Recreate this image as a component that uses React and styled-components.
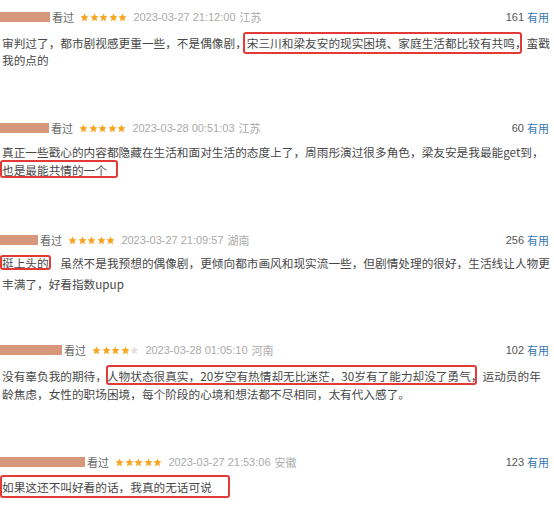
import React from "react";
import styled, { createGlobalStyle } from "styled-components";

const Global = createGlobalStyle`
  html, body { margin: 0; padding: 0; background: #fff; }
  body { width: 554px; height: 505px; overflow: hidden; }
`;

const List = styled.div`
  width: 554px;
  display: flex;
  flex-direction: column;
`;

const Item = styled.div`
  height: ${(p) => p.$h}px;
  padding-top: 7px;
  box-sizing: border-box;
  display: flex;
  flex-direction: column;
`;

const Header = styled.div`
  height: 20px;
  display: flex;
  align-items: center;
  padding-right: 5px;
  font-family: "Liberation Sans", "Noto Sans CJK SC", sans-serif;
  font-size: 11px;
`;

const Bar = styled.div`
  width: ${(p) => p.$w}px;
  height: 10px;
  background: #d6977b;
  flex: none;
`;

const Watched = styled.span`
  margin-left: 2px;
  color: #666;
  font-family: "Noto Sans CJK SC", sans-serif;
  font-size: 11px;
`;

const Stars = styled.span`
  display: inline-flex;
  gap: 0.6px;
  margin-left: 6px;
`;

const Date = styled.span`
  margin-left: 6px;
  color: #aaa;
`;

const Region = styled.span`
  margin-left: 4px;
  color: #aaa;
  font-family: "Noto Sans CJK SC", sans-serif;
`;

const Votes = styled.span`
  margin-left: auto;
  color: #555;
`;

const Useful = styled.span`
  margin-left: 3px;
  color: #3a77b0;
  font-family: "Noto Sans CJK SC", sans-serif;
`;

const Body = styled.div`
  margin-top: ${(p) => p.$m}px;
  padding-left: 2px;
  font-family: "Noto Sans CJK SC", sans-serif;
  font-size: 11.67px;
  line-height: ${(p) => p.$lh}px;
  color: #484848;
`;

const Line = styled.div`
  white-space: pre;
`;

const Mark = styled.span`
  position: relative;
  &::after {
    content: "";
    position: absolute;
    left: ${(p) => -p.$b.l}px;
    right: ${(p) => -p.$b.r}px;
    top: ${(p) => -p.$b.t}px;
    bottom: ${(p) => -p.$b.b}px;
    border: 2px solid #e23a36;
    border-radius: 3px;
    pointer-events: none;
  }
`;

const Star = ({ on }) => (
  <svg width="9" height="9" viewBox="0 0 24 24">
    <path
      d="M12 1.2l3.2 7.1 7.7.8-5.8 5.2 1.7 7.6L12 18l-6.8 3.9 1.7-7.6L1.1 9.1l7.7-.8z"
      fill={on ? "#f6a623" : "#e2e2e2"}
    />
  </svg>
);

const entries = [
  {
    bar: 50, stars: 5, date: "2023-03-27 21:12:00", region: "江苏", votes: 161, h: 111, m: 6.5, lh: 17,
    lines: [
      ["审判过了，都市剧视感更重一些，不是偶像剧，", { t: "宋三川和梁友安的现实困境、家庭生活都比较有共鸣，", b: { l: 4, r: -5, t: 2, b: 3 } }, "蛮戳"],
      ["我的点的"],
    ],
  },
  {
    bar: 49, stars: 5, date: "2023-03-28 00:51:03", region: "江苏", votes: 60, h: 112, m: 5, lh: 18,
    lines: [
      ["真正一些戳心的内容都隐藏在生活和面对生活的态度上了，周雨彤演过很多角色，梁友安是我最能get到，"],
      [{ t: "也是最能共情的一个", b: { l: 2, r: 11, t: 1, b: 0 } }],
    ],
  },
  {
    bar: 38, stars: 5, date: "2023-03-27 21:09:57", region: "湖南", votes: 256, h: 110, m: 2, lh: 21,
    lines: [
      [{ t: "挺上头的", b: { l: 2, r: 2, t: -1, b: -1 } }, "\u3000虽然不是我预想的偶像剧，更倾向都市画风和现实流一些，但剧情处理的很好，生活线让人物更"],
      ["丰满了，好看指数upup"],
    ],
  },
  {
    bar: 62, stars: 4, date: "2023-03-28 01:05:10", region: "河南", votes: 102, h: 112, m: 7, lh: 18,
    lines: [
      ["没有辜负我的期待，", { t: "人物状态很真实，20岁空有热情却无比迷茫，30岁有了能力却没了勇气，", b: { l: 1, r: -6, t: 2, b: 1 } }, "运动员的年"],
      ["龄焦虑，女性的职场困境，每个阶段的心境和想法都不尽相同，太有代入感了。"],
    ],
  },
  {
    bar: 85, stars: 5, date: "2023-03-27 21:53:06", region: "安徽", votes: 123, h: 60, m: 6, lh: 18,
    lines: [[{ t: "如果这还不叫好看的话，我真的无话可说", b: { l: 2, r: 18, t: 3, b: 3 } }]],
  },
];

export default function App() {
  return (
    <>
      <Global />
      <List>
        {entries.map((e, i) => (
          <Item key={i} $h={e.h}>
            <Header>
              <Bar $w={e.bar} />
              <Watched>看过</Watched>
              <Stars>
                {[0, 1, 2, 3, 4].map((k) => (
                  <Star key={k} on={k < e.stars} />
                ))}
              </Stars>
              <Date>{e.date}</Date>
              <Region>{e.region}</Region>
              <Votes>{e.votes}</Votes>
              <Useful>有用</Useful>
            </Header>
            <Body $m={e.m} $lh={e.lh}>
              {e.lines.map((ln, j) => (
                <Line key={j}>
                  {ln.map((seg, k) =>
                    typeof seg === "string" ? (
                      <React.Fragment key={k}>{seg}</React.Fragment>
                    ) : (
                      <Mark key={k} $b={seg.b}>{seg.t}</Mark>
                    )
                  )}
                </Line>
              ))}
            </Body>
          </Item>
        ))}
      </List>
    </>
  );
}
